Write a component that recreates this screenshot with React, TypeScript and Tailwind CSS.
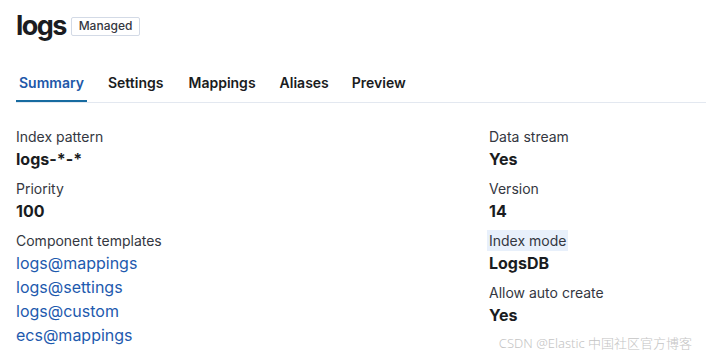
import React from "react";

const font = { fontFamily: "Inter, 'Noto Sans', sans-serif" };

function Field({ label, value, highlight }: { label: string; value: React.ReactNode; highlight?: boolean }) {
  return (
    <div className="mb-[7px]">
      <div className="text-[14px] leading-[21px] text-[#343741]">
        {highlight ? (
          <span className="bg-[#e8f0fb] -mx-[2px] px-[2px] py-[0px] inline-block">{label}</span>
        ) : (
          label
        )}
      </div>
      <div className="text-[16px] leading-[24px] font-bold text-[#1a1c21]">{value}</div>
    </div>
  );
}

export default function App() {
  const tabs = ["Summary", "Settings", "Mappings", "Aliases", "Preview"];
  const gaps = ["", "ml-[18px]", "ml-[19px]", "ml-[18px]", "ml-[17px]"];
  return (
    <div className="relative w-[706px] h-[358px] bg-white overflow-hidden" style={font}>
      <div className="pl-4 pt-[8px]">
        <div className="flex items-center h-[36px]">
          <h1 className="text-[27px] leading-[36px] font-bold text-[#1a1c21] tracking-[-1.6px]">logs</h1>
          <span className="ml-[5px] h-[19px] flex items-center px-[7px] border border-[#d3dae6] rounded-[2px] text-[12px] font-medium text-[#343741]">
            Managed
          </span>
        </div>
      </div>
      <div className="mt-[29px] ml-4 flex border-b border-[#e3e8f0] h-[30px]">
        {tabs.map((t, i) => (
          <div
            key={t}
            className={`relative h-[29px] px-[3px] text-[14px] leading-[20px] font-semibold ${
              i === 0 ? "text-[#2157a8]" : "text-[#1a1c21]"
            } ${gaps[i]}`}
          >
            {t}
            {i === 0 && <div className="absolute left-0 right-0 bottom-0 h-[2px] bg-[#176ba0]" />}
          </div>
        ))}
      </div>
      <div className="grid grid-cols-[473px_1fr] pl-4 pt-[23px]">
        <div>
          <Field label="Index pattern" value="logs-*-*" />
          <Field label="Priority" value="100" />
          <div className="text-[14px] leading-[21px] text-[#343741]">Component templates</div>
          <div className="flex flex-col text-[16px] leading-[24px] text-[#1e5aae]">
            <span>logs@mappings</span>
            <span>logs@settings</span>
            <span>logs@custom</span>
            <span>ecs@mappings</span>
          </div>
        </div>
        <div>
          <Field label="Data stream" value="Yes" />
          <Field label="Version" value="14" />
          <Field label="Index mode" value="LogsDB" highlight />
          <Field label="Allow auto create" value="Yes" />
        </div>
      </div>
      <div
        className="absolute right-[14px] bottom-[5px] text-[13px] leading-[20px] text-[#c4c4c4] font-light"
        style={{ fontFamily: "'Noto Sans', 'Noto Sans CJK SC', sans-serif" }}
      >
        CSDN @Elastic 中国社区官方博客
      </div>
    </div>
  );
}
